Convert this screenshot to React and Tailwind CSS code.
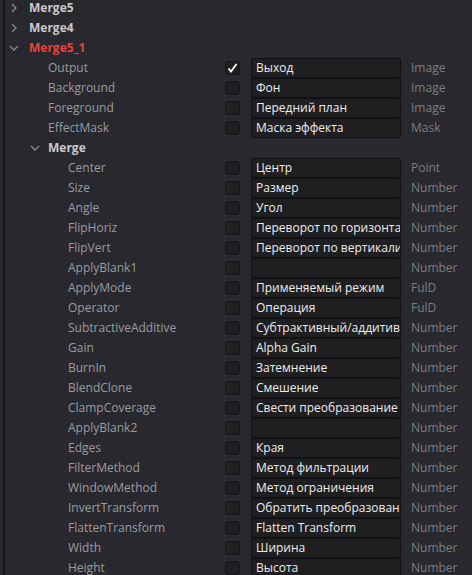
import React from "react";

const groups = [
  { name: "Merge5", open: false },
  { name: "Merge4", open: false },
];

const topRows = [
  ["Output", "Выход", "Image", true],
  ["Background", "Фон", "Image"],
  ["Foreground", "Передний план", "Image"],
  ["EffectMask", "Маска эффекта", "Mask"],
];

const mergeRows = [
  ["Center", "Центр", "Point"],
  ["Size", "Размер", "Number"],
  ["Angle", "Угол", "Number"],
  ["FlipHoriz", "Переворот по горизонтали", "Number"],
  ["FlipVert", "Переворот по вертикали", "Number"],
  ["ApplyBlank1", "", "Number"],
  ["ApplyMode", "Применяемый режим", "FulD"],
  ["Operator", "Операция", "FulD"],
  ["SubtractiveAdditive", "Субтрактивный/аддитивный", "Number"],
  ["Gain", "Alpha Gain", "Number"],
  ["BurnIn", "Затемнение", "Number"],
  ["BlendClone", "Смешение", "Number"],
  ["ClampCoverage", "Свести преобразование", "Number"],
  ["ApplyBlank2", "", "Number"],
  ["Edges", "Края", "Number"],
  ["FilterMethod", "Метод фильтрации", "Number"],
  ["WindowMethod", "Метод ограничения", "Number"],
  ["InvertTransform", "Обратить преобразование", "Number"],
  ["FlattenTransform", "Flatten Transform", "Number"],
  ["Width", "Ширина", "Number"],
  ["Height", "Высота", "Number"],
];

function ChevronRight() {
  return (
    <svg width="8" height="10" viewBox="0 0 8 10" className="shrink-0">
      <path d="M2 1 L6 5 L2 9" fill="none" stroke="#8a8a8e" strokeWidth="1.3" />
    </svg>
  );
}

function ChevronDown() {
  return (
    <svg width="10" height="8" viewBox="0 0 10 8" className="shrink-0">
      <path d="M1 2 L5 6 L9 2" fill="none" stroke="#8a8a8e" strokeWidth="1.3" />
    </svg>
  );
}

function Row({ label, value, type, checked, indent }) {
  return (
    <div className="flex h-[20px] items-center">
      <div className={`${indent} w-[225px] shrink-0 truncate text-[12px] text-[#9b9ba0]`}>{label}</div>
      <div className="flex h-[14px] w-[15px] shrink-0 items-center justify-center rounded-[3px] border border-[#151517] bg-[#202023]">
        {checked && (
          <svg width="11" height="10" viewBox="0 0 11 10">
            <path d="M1.5 5.5 L4 8.5 L9.5 1" fill="none" stroke="#ffffff" strokeWidth="1.8" />
          </svg>
        )}
      </div>
      <div className="ml-[11px] flex h-[20px] w-[150px] shrink-0 items-center overflow-hidden whitespace-nowrap rounded-[2px] border border-[#111113] bg-[#1f1f21] pl-[4px] text-[12px] text-[#eeeeee]">
        {value}
      </div>
      <div className="ml-[10px] text-[12px] text-[#7d7d82]">{type}</div>
    </div>
  );
}

export default function App() {
  return (
    <div
      className="relative h-[575px] w-[472px] overflow-hidden bg-[#28282e]"
      style={{ fontFamily: '"Open Sans", "Noto Sans", sans-serif' }}
    >
      <div className="absolute left-[3px] top-0 h-full w-[2px] bg-[#141416]" />
      <div className="mt-[-2px] flex flex-col">
        {groups.map((g) => (
          <div key={g.name} className="flex h-[20px] items-center">
            <div className="ml-[10px] w-[19px]">
              <ChevronRight />
            </div>
            <div className="text-[12px] font-bold text-[#c9c9cc]">{g.name}</div>
          </div>
        ))}
        <div className="flex h-[20px] items-center">
          <div className="ml-[9px] w-[20px]">
            <ChevronDown />
          </div>
          <div className="text-[12px] font-bold text-[#e8433a]">Merge5_1</div>
        </div>
        {topRows.map(([l, v, t, c]) => (
          <Row key={l} label={l} value={v} type={t} checked={c} indent="pl-[48px] w-[225px]" />
        ))}
        <div className="flex h-[20px] items-center">
          <div className="ml-[30px] w-[18px]">
            <ChevronDown />
          </div>
          <div className="text-[12px] font-bold text-[#c9c9cc]">Merge</div>
        </div>
        {mergeRows.map(([l, v, t]) => (
          <Row key={l} label={l} value={v} type={t} indent="pl-[68px]" />
        ))}
      </div>
    </div>
  );
}
